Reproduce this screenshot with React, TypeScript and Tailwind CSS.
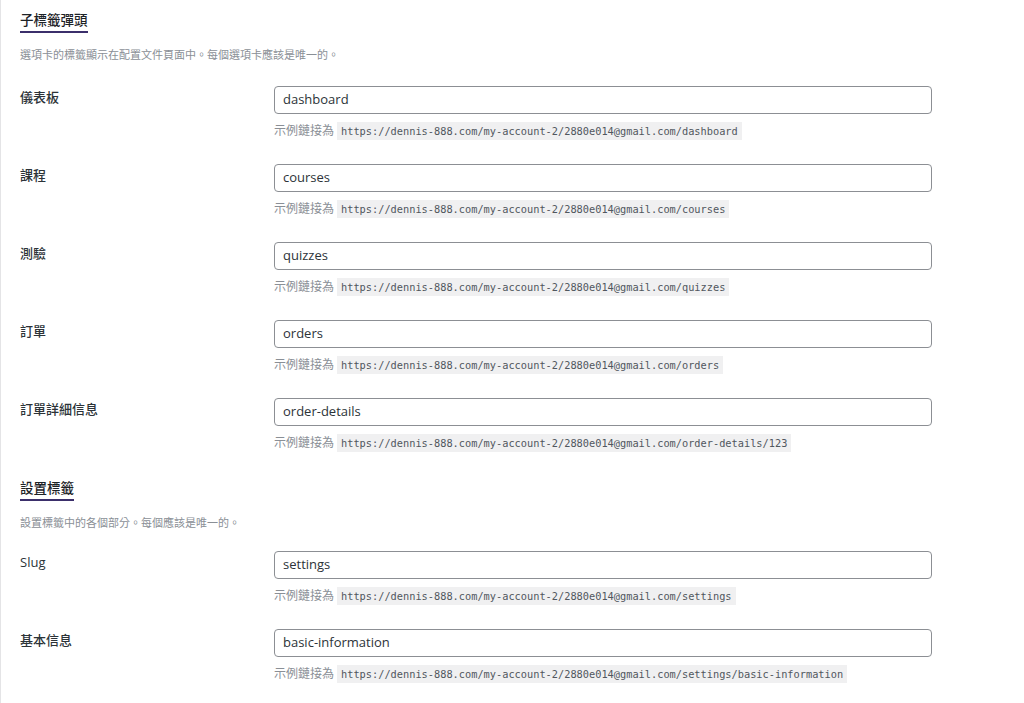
const BASE = 'https://dennis-888.com/my-account-2/2880e014@gmail.com/'

const FONT = "font-['Segoe_UI','Open_Sans','Noto_Sans_CJK_TC',sans-serif]"

interface Field {
  label: string
  value: string
  path: string
}

const tabFields: Field[] = [
  { label: '儀表板', value: 'dashboard', path: 'dashboard' },
  { label: '課程', value: 'courses', path: 'courses' },
  { label: '測驗', value: 'quizzes', path: 'quizzes' },
  { label: '訂單', value: 'orders', path: 'orders' },
  { label: '訂單詳細信息', value: 'order-details', path: 'order-details/123' },
]

const settingFields: Field[] = [
  { label: 'Slug', value: 'settings', path: 'settings' },
  { label: '基本信息', value: 'basic-information', path: 'settings/basic-information' },
]

function SectionHeading({ title, desc }: { title: string; desc: string }) {
  return (
    <div>
      <h2 className="inline-block text-[13.5px] font-medium text-[#1d2327] leading-[18px] pb-[2px] border-b-2 border-[#3b2f6b]">
        {title}
      </h2>
      <p className="mt-[14px] text-[11px] text-[#8a8f96] leading-[16px]">{desc}</p>
    </div>
  )
}

function FieldRow({ field }: { field: Field }) {
  return (
    <div className="flex">
      <div className="w-[254px] shrink-0 pt-[2px] text-[13px] text-[#2c3338] font-medium leading-[18px]">
        {field.label}
      </div>
      <div className="w-[658px]">
        <div className="h-[28px] border border-[#8c8f94] rounded-[4px] bg-white px-[8px] flex items-center text-[13px] text-[#2c3338]">
          {field.value}
        </div>
        <div className="mt-[8px] flex items-center text-[12px] text-[#8a8f96] leading-[18px]">
          <span>示例鏈接為</span>
          <code className="ml-[3px] px-[4px] bg-[#f0f0f1] text-[#50575e] text-[10.3px] leading-[18px] font-['DejaVu_Sans_Mono','Liberation_Mono',monospace]">
            {BASE + field.path}
          </code>
        </div>
      </div>
    </div>
  )
}

export default function App() {
  return (
    <div className={`${FONT} min-h-[703px] bg-white border-l border-[#e4e4e6] pl-[19px] pt-[7px]`}>
      <SectionHeading title="子標籤彈頭" desc="選項卡的標籤顯示在配置文件頁面中。每個選項卡應該是唯一的。" />
      <div className="mt-[23px] flex flex-col gap-[24px]">
        {tabFields.map((f) => (
          <FieldRow key={f.value} field={f} />
        ))}
      </div>
      <div className="mt-[23px]">
        <SectionHeading title="設置標籤" desc="設置標籤中的各個部分。每個應該是唯一的。" />
      </div>
      <div className="mt-[20px] flex flex-col gap-[24px]">
        {settingFields.map((f) => (
          <FieldRow key={f.value} field={f} />
        ))}
      </div>
    </div>
  )
}
